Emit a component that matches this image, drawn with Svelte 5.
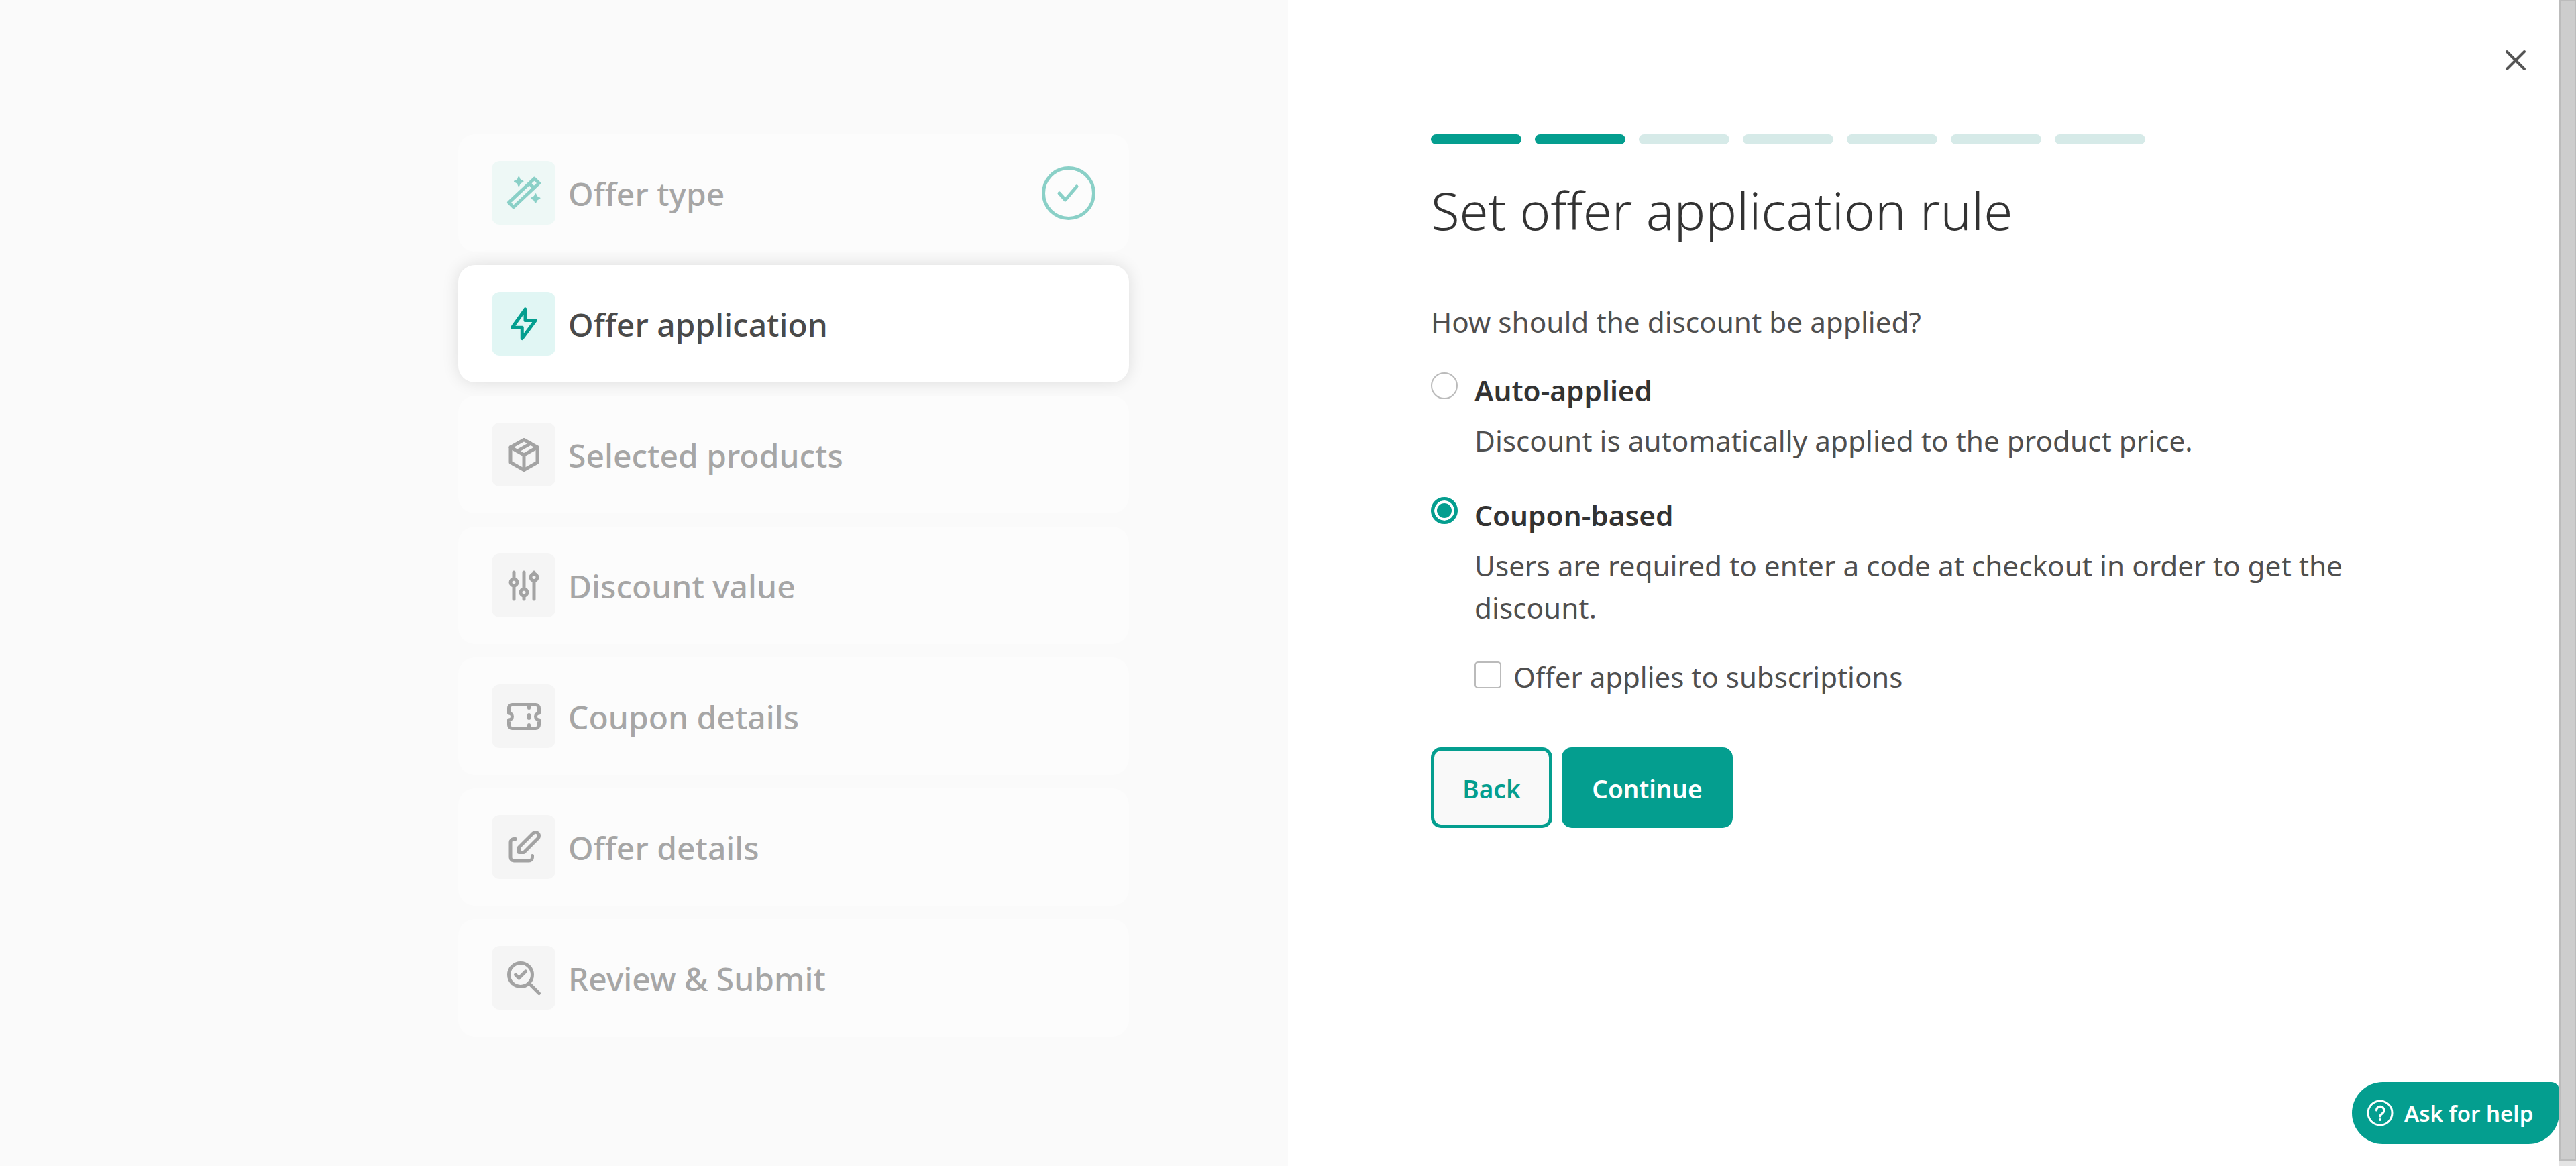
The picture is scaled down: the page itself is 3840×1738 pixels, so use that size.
<script>
  // 오퍼 생성 마법사 — 2단계 화면.
  const steps = [
    { key: "wand", label: "Offer type", state: "done" },
    { key: "bolt", label: "Offer application", state: "active" },
    { key: "package", label: "Selected products", state: "todo" },
    { key: "sliders", label: "Discount value", state: "todo" },
    { key: "ticket", label: "Coupon details", state: "todo" },
    { key: "edit", label: "Offer details", state: "todo" },
    { key: "review", label: "Review & Submit", state: "todo" },
  ];

  const icons = {
    bolt: ["M12.8 3.2V9.8H18.9L10.9 20.6V14.1H5Z"],
    package: ["M12 3l8 4.5v9L12 21l-8-4.5v-9L12 3", "M12 12l8-4.5", "M12 12v9", "M12 12L4 7.5", "M16 5.25l-8 4.5"],
    sliders: [
      "M4 10a2 2 0 1 0 4 0a2 2 0 0 0-4 0", "M6 4v4", "M6 12v8",
      "M10 16a2 2 0 1 0 4 0a2 2 0 0 0-4 0", "M12 4v10", "M12 18v2",
      "M16 7a2 2 0 1 0 4 0a2 2 0 0 0-4 0", "M18 4v1", "M18 9v11",
    ],
    ticket: [
      "M15 5v2", "M15 11v2", "M15 17v2",
      "M5 5h14a2 2 0 0 1 2 2v3a2 2 0 0 0 0 4v3a2 2 0 0 1-2 2H5a2 2 0 0 1-2-2v-3a2 2 0 0 0 0-4V7a2 2 0 0 1 2-2",
    ],
    edit: [
      "M7 7H6a2 2 0 0 0-2 2v9a2 2 0 0 0 2 2h9a2 2 0 0 0 2-2v-1",
      "M20.385 6.585a2.1 2.1 0 0 0-2.97-2.97L9 12v3h3l8.385-8.415",
    ],
    review: ["M3 10a7 7 0 1 0 14 0a7 7 0 1 0-14 0", "M21 21l-6-6", "M7 10l2 2l4-4"],
    wand: ["M18.2 3.3L21 6L5.8 20.3L3 17.5Z", "M15.4 6.3L17.9 8.8"],
  };

  const bars = [true, true, false, false, false, false, false];
</script>

<div class="page">
  <aside class="side">
    <ol class="steps">
      {#each steps as step}
        <li class="step {step.state}">
          <span class="tile">
            <svg viewBox="0 0 24 24" width="60" height="60" fill="none" stroke="currentColor" stroke-width="2" stroke-linecap="round" stroke-linejoin="round">
              {#each icons[step.key] as d}
                <path {d} />
              {/each}
              {#if step.key === "wand"}
                <path class="spark" d="M8.9 2.6Q9.3 4.6 11.3 5Q9.3 5.4 8.9 7.4Q8.5 5.4 6.5 5Q8.5 4.6 8.9 2.6Z" />
                <path class="spark" d="M18.9 12.6Q19.3 14.6 21.3 15Q19.3 15.4 18.9 17.4Q18.5 15.4 16.5 15Q18.5 14.6 18.9 12.6Z" />
              {/if}
            </svg>
          </span>
          <span class="step-label">{step.label}</span>
          {#if step.state === "done"}
            <span class="tick">
              <svg viewBox="0 0 80 80" width="80" height="80" fill="none" stroke="currentColor" stroke-linecap="round" stroke-linejoin="round">
                <circle cx="40" cy="40" r="37.5" stroke-width="5" />
                <path d="M26 40l9 10L52 30" stroke-width="5" />
              </svg>
            </span>
          {/if}
        </li>
      {/each}
    </ol>
  </aside>

  <main class="main">
    <div class="bars">
      {#each bars as on}
        <span class="bar" class:on></span>
      {/each}
    </div>
    <h1>Set offer application rule</h1>
    <p class="question">How should the discount be applied?</p>

    <div class="option">
      <span class="radio"></span>
      <div class="option-body">
        <div class="option-title">Auto-applied</div>
        <p class="option-desc">Discount is automatically applied to the product price.</p>
      </div>
    </div>

    <div class="option second">
      <span class="radio checked"></span>
      <div class="option-body">
        <div class="option-title">Coupon-based</div>
        <p class="option-desc">Users are required to enter a code at checkout in order to get the discount.</p>
        <div class="check-row">
          <span class="checkbox"></span>
          <span>Offer applies to subscriptions</span>
        </div>
      </div>
    </div>

    <div class="actions">
      <button class="btn back">Back</button>
      <button class="btn next">Continue</button>
    </div>
  </main>

  <div class="scrollbar"><div class="thumb"></div></div>

  <button class="close" aria-label="Close">
    <svg viewBox="0 0 32 32" width="32" height="32" fill="none" stroke="currentColor" stroke-width="4" stroke-linecap="round">
      <path d="M3 3l26 26M29 3L3 29" />
    </svg>
  </button>

  <button class="help">
    <svg viewBox="0 0 24 24" width="48" height="48" fill="none" stroke="currentColor" stroke-width="1.5" stroke-linecap="round" stroke-linejoin="round">
      <circle cx="12" cy="12" r="9" />
      <path d="M12 17v.01" stroke-width="2" />
      <path d="M9.3 10a2.8 2.8 0 1 1 4.4 2.3c-1 .7-1.7 1.2-1.7 2.2" stroke-width="1.6" />
    </svg>
    <span>Ask for help</span>
  </button>
</div>

<style>
  :global(body) {
    margin: 0;
    font-family: "Noto Sans", "Open Sans", sans-serif;
    background: #fff;
  }
  .page {
    position: relative;
    display: flex;
    height: 1738px;
    overflow: hidden;
  }

  /* 왼쪽 단계 목록 */
  .side {
    flex: 0 0 1920px;
    box-sizing: border-box;
    padding: 200px 237px 0 683px;
    background: #fafafa;
  }
  .steps {
    display: flex;
    flex-direction: column;
    gap: 20px;
    margin: 0;
    padding: 0;
    list-style: none;
  }
  .step {
    display: flex;
    align-items: center;
    box-sizing: border-box;
    height: 175px;
    padding: 0 50px;
    border-radius: 25px;
    background: #fcfcfc;
    color: #a6a6a6;
    font-size: 48px;
    font-weight: 500;
  }
  .step.active {
    background: #fff;
    color: #4a4a4a;
    box-shadow: 0 0 25px rgba(0, 0, 0, 0.12);
  }
  .tile {
    display: flex;
    align-items: center;
    justify-content: center;
    flex: 0 0 95px;
    height: 95px;
    margin-right: 19px;
    border-radius: 12px;
    background: #f5f5f5;
    color: #a3a3a3;
  }
  .done .tile {
    background: #eef8f6;
    color: #8ad0c7;
  }
  .active .tile {
    background: #e1f6f4;
    color: #049e8f;
  }
  .spark {
    fill: currentColor;
    stroke-width: 1;
  }
  .step-label {
    flex: 1;
    position: relative;
    top: 1px;
  }
  .tick {
    display: flex;
    color: #8ad0c7;
  }

  /* 오른쪽 폼 */
  .main {
    flex: 1;
    box-sizing: border-box;
    padding: 200px 0 0 213px;
    color: #4f4f4f;
    font-size: 42.3px;
  }
  .bars {
    display: flex;
    gap: 20px;
  }
  .bar {
    width: 135px;
    height: 15px;
    border-radius: 8px;
    background: #d6eae8;
  }
  .bar.on {
    background: #049e8f;
  }
  h1 {
    margin: 48px 0 0;
    color: #333;
    font-size: 78px;
    font-weight: 300;
    line-height: 100px;
  }
  .question {
    margin: 86px 0 0;
    line-height: 62px;
  }
  .option {
    display: flex;
    margin-top: 42px;
  }
  .option.second {
    margin-top: 51px;
  }
  .radio {
    flex: 0 0 40px;
    box-sizing: border-box;
    height: 40px;
    margin: 2px 25px 0 0;
    border: 2px solid #bbb;
    border-radius: 50%;
    background: #fff;
  }
  .radio.checked {
    border: 5px solid #049e8f;
    box-shadow: inset 0 0 0 4px #fff;
    background: #049e8f;
  }
  .option-body {
    width: 1320px;
  }
  .option-title {
    margin-top: -2px;
    color: #333;
    font-weight: 600;
    line-height: 62px;
  }
  .option-desc {
    margin: 12px 0 0;
    line-height: 63px;
  }
  .check-row {
    display: flex;
    align-items: center;
    gap: 18px;
    margin-top: 41px;
    font-size: 42px;
    line-height: 62px;
  }
  .checkbox {
    flex: 0 0 40px;
    box-sizing: border-box;
    height: 40px;
    margin-top: -6px;
    border: 2px solid #bbb;
    border-radius: 5px;
    background: #fff;
  }
  .actions {
    display: flex;
    gap: 14px;
    margin-top: 74px;
  }
  .btn {
    box-sizing: border-box;
    height: 120px;
    padding-top: 3px;
    border-radius: 15px;
    font-family: inherit;
    font-size: 37px;
    font-weight: 600;
  }
  .back {
    width: 181px;
    border: 5px solid #049e8f;
    background: #f9f9f9;
    color: #049e8f;
  }
  .next {
    width: 255px;
    border: 0;
    background: #049e8f;
    color: #fff;
  }

  .scrollbar {
    flex: 0 0 25px;
    background: #e4e4e4;
  }
  .thumb {
    box-sizing: border-box;
    height: 1730px;
    border: 2px solid #bcbcbc;
    background: #cdcdcd;
  }

  .close {
    position: absolute;
    top: 74px;
    right: 74px;
    display: flex;
    padding: 0;
    border: 0;
    background: none;
    color: #555;
  }
  .help {
    position: absolute;
    top: 1613px;
    left: 3506px;
    display: flex;
    align-items: center;
    gap: 12px;
    box-sizing: border-box;
    width: 309px;
    height: 92px;
    padding: 0 0 0 18px;
    border: 0;
    border-radius: 46px 12px 46px 46px;
    background: #049e8f;
    color: #fff;
    font-family: inherit;
    font-size: 33px;
    font-weight: 600;
  }
</style>
